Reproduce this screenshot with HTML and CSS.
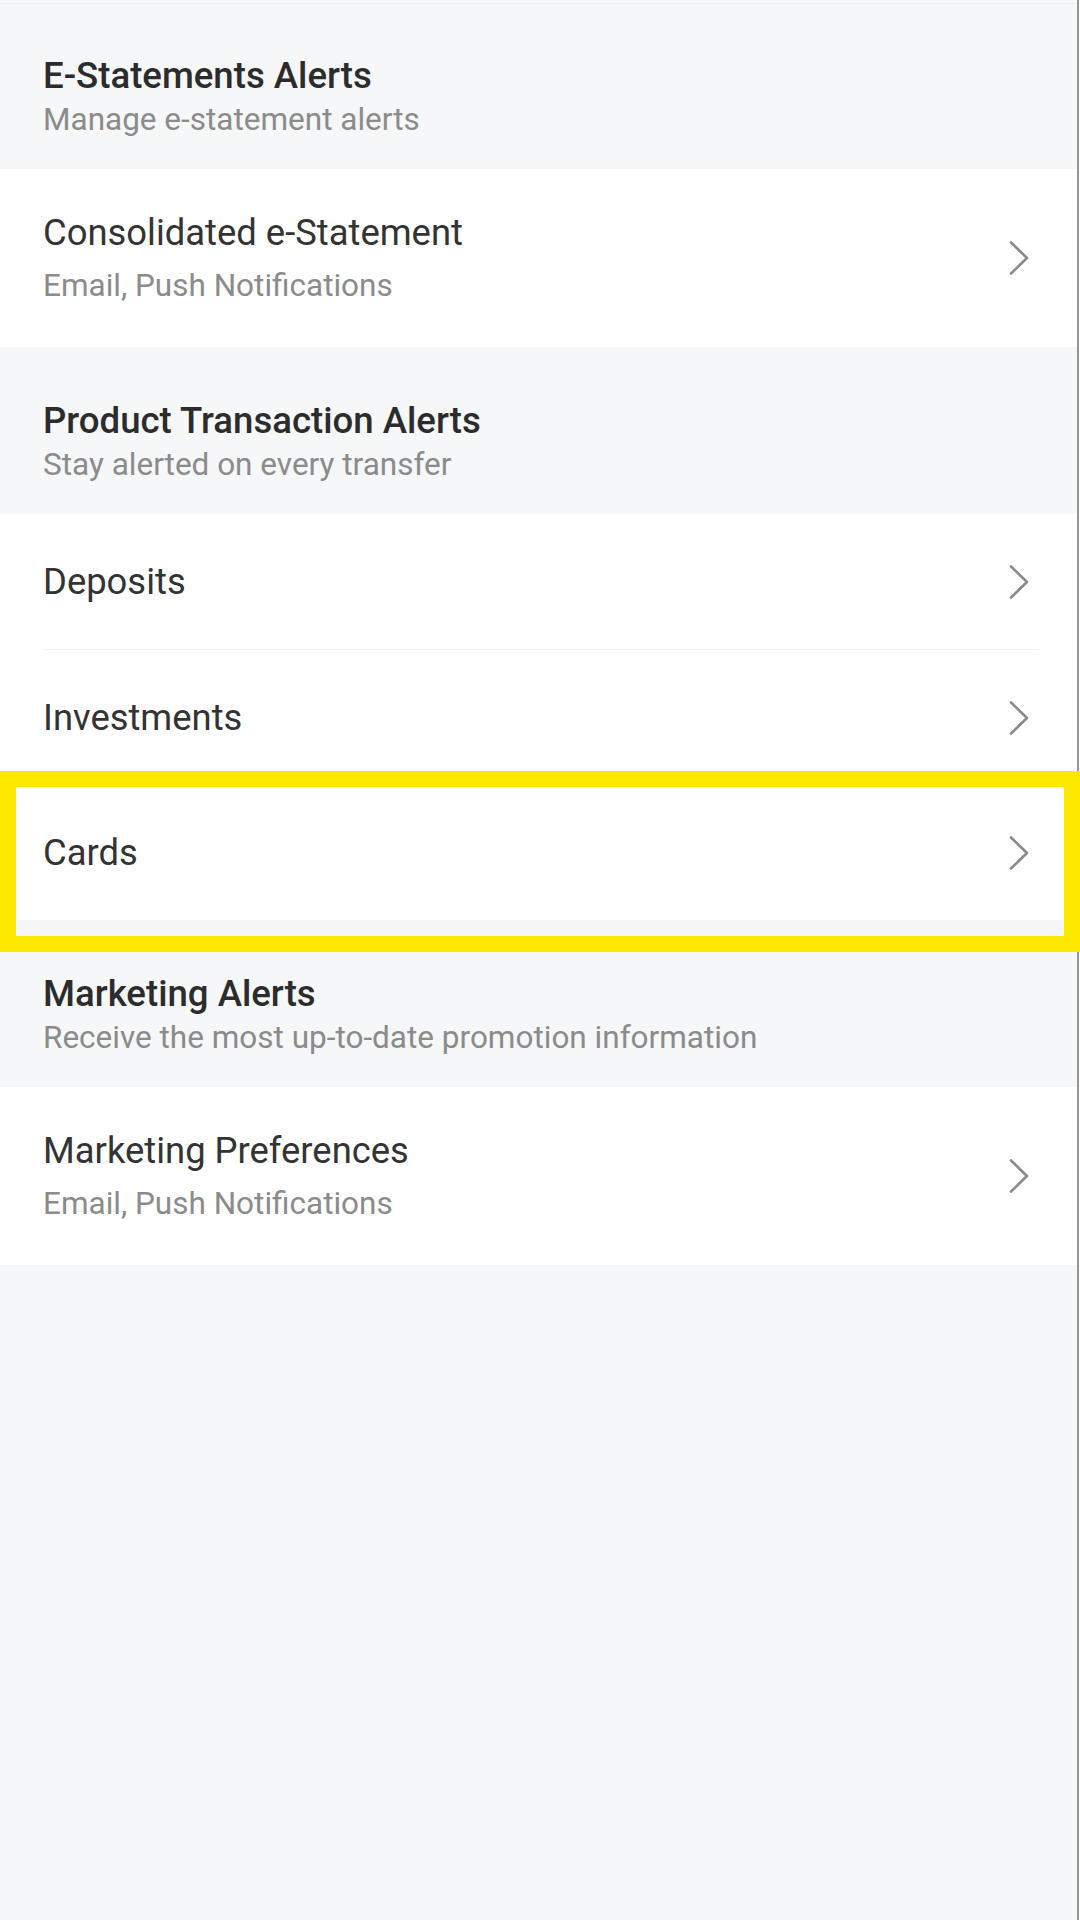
FILE: index.html
```html
<!DOCTYPE html>
<html lang="en">
<head>
  <meta charset="UTF-8">
  <title>Alerts</title>
  <link rel="stylesheet" href="styles.css">
</head>
<body>
<div class="page">
  <div class="topline"></div>

  <!--e-statement-->
  <div class="head first">
    <h2>E-Statements Alerts</h2>
    <p>Manage e-statement alerts</p>
  </div>
  <ul class="list">
    <li class="item tall">
      <div class="text">
        <span class="name">Consolidated e-Statement</span>
        <span class="desc">Email, Push Notifications</span>
      </div>
      <svg class="arrow" width="20" height="34" viewBox="0 0 20 34"><path d="M2 1.5 L18 17 L2 32.5"/></svg>
    </li>
  </ul>

  <!--product-->
  <div class="head">
    <h2>Product Transaction Alerts</h2>
    <p>Stay alerted on every transfer</p>
  </div>
  <ul class="list">
    <li class="item">
      <span class="name">Deposits</span>
      <svg class="arrow" width="20" height="34" viewBox="0 0 20 34"><path d="M2 1.5 L18 17 L2 32.5"/></svg>
    </li>
    <li class="line"></li>
    <li class="item">
      <span class="name">Investments</span>
      <svg class="arrow" width="20" height="34" viewBox="0 0 20 34"><path d="M2 1.5 L18 17 L2 32.5"/></svg>
    </li>
    <li class="item mark">
      <span class="name">Cards</span>
      <svg class="arrow" width="20" height="34" viewBox="0 0 20 34"><path d="M2 1.5 L18 17 L2 32.5"/></svg>
    </li>
  </ul>

  <!--marketing-->
  <div class="head">
    <h2>Marketing Alerts</h2>
    <p>Receive the most up-to-date promotion information</p>
  </div>
  <ul class="list">
    <li class="item tall">
      <div class="text">
        <span class="name">Marketing Preferences</span>
        <span class="desc">Email, Push Notifications</span>
      </div>
      <svg class="arrow" width="20" height="34" viewBox="0 0 20 34"><path d="M2 1.5 L18 17 L2 32.5"/></svg>
    </li>
  </ul>
</div>
</body>
</html>
```

FILE: styles.css
```css
*{
    margin: 0;
    padding: 0;
}
html, body{
    background: #ffffff;
}
body{
    font-family: Roboto, "Liberation Sans", sans-serif;
}
.page{
    width: 1077px;
    min-height: 1920px;
    background: #f6f7f9;
    border-right: 2px solid #969696;
}
.topline{
    height: 3px;
    border-bottom: 1px dotted #e2e3e6;
}
.head{
    height: 167px;
    box-sizing: border-box;
    padding: 53px 43px 0;
}
.head.first{
    height: 165px;
    padding-top: 51px;
}
.head h2{
    font-size: 36.6px;
    font-weight: 500;
    line-height: 42px;
    color: #2c2c2c;
}
.head p{
    margin-top: 5px;
    font-size: 31.5px;
    line-height: 36px;
    color: #8b8b8b;
}
.list{
    list-style: none;
    background: #ffffff;
}
.item{
    position: relative;
    height: 135px;
    display: flex;
    align-items: center;
    justify-content: space-between;
    padding: 0 48px 0 43px;
}
.item.tall{
    height: 178px;
    align-items: flex-start;
}
.text{
    display: flex;
    flex-direction: column;
    padding-top: 43px;
}
.name{
    font-size: 36.4px;
    line-height: 42px;
    color: #333333;
}
.desc{
    margin-top: 14px;
    font-size: 31.5px;
    line-height: 36px;
    color: #8b8b8b;
}
.item.tall .arrow{
    align-self: center;
}
.arrow{
    fill: none;
    stroke: #8a8a8a;
    stroke-width: 2.6;
    stroke-linecap: round;
    stroke-linejoin: round;
}
.line{
    height: 1px;
    margin: 0 39px 0 43px;
    background: #f0f0f2;
}
/* 高亮框 */
.mark::after{
    content: "";
    position: absolute;
    left: 0;
    right: -3px;
    top: -14px;
    bottom: -32px;
    border: 16px solid #ffe800;
    pointer-events: none;
}
```
